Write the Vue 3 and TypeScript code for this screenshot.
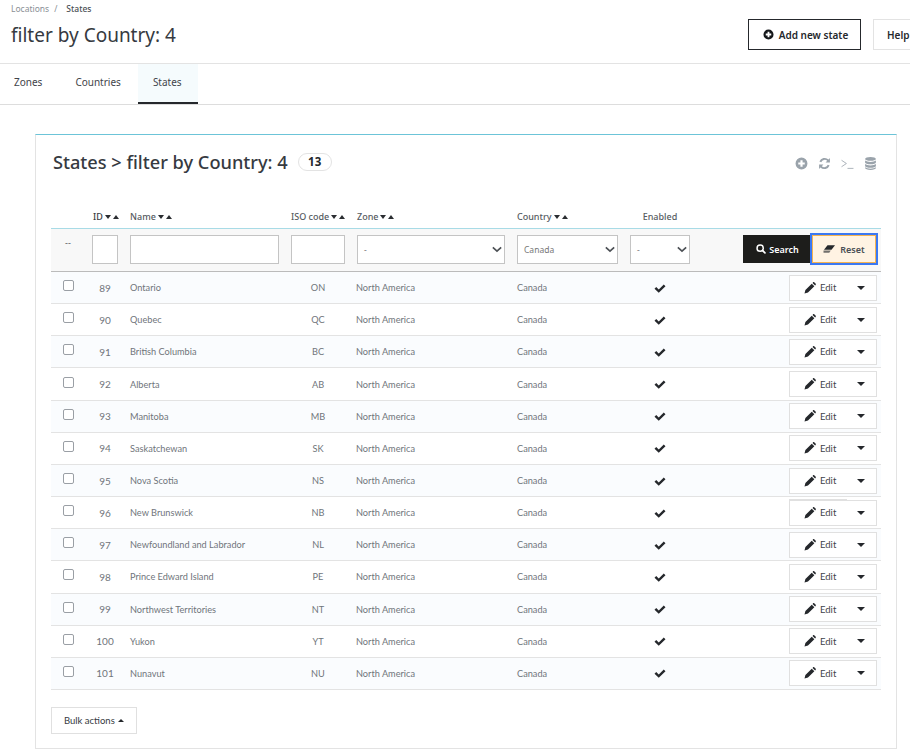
<script setup lang="ts">
interface StateRow {
  id: number;
  name: string;
  iso: string;
}

const rows: StateRow[] = [
  { id: 89, name: 'Ontario', iso: 'ON' },
  { id: 90, name: 'Quebec', iso: 'QC' },
  { id: 91, name: 'British Columbia', iso: 'BC' },
  { id: 92, name: 'Alberta', iso: 'AB' },
  { id: 93, name: 'Manitoba', iso: 'MB' },
  { id: 94, name: 'Saskatchewan', iso: 'SK' },
  { id: 95, name: 'Nova Scotia', iso: 'NS' },
  { id: 96, name: 'New Brunswick', iso: 'NB' },
  { id: 97, name: 'Newfoundland and Labrador', iso: 'NL' },
  { id: 98, name: 'Prince Edward Island', iso: 'PE' },
  { id: 99, name: 'Northwest Territories', iso: 'NT' },
  { id: 100, name: 'Yukon', iso: 'YT' },
  { id: 101, name: 'Nunavut', iso: 'NU' },
];

const sortable = [
  { label: 'ID', cls: 'th-id' },
  { label: 'Name', cls: 'th-name' },
  { label: 'ISO code', cls: 'th-iso' },
  { label: 'Zone', cls: 'th-zone' },
  { label: 'Country', cls: 'th-country' },
];
</script>

<template>
  <div class="page">
    <header class="page-head">
      <div class="head-left">
        <div class="breadcrumb">
          <span class="crumb">Locations</span>
          <span class="crumb-sep">/</span>
          <span class="crumb-active">States</span>
        </div>
        <h1 class="page-title">filter by Country: 4</h1>
      </div>
      <div class="head-actions">
        <button class="btn-add">
          <svg class="ico-add" viewBox="0 0 24 24">
            <path fill-rule="evenodd" d="M12 1a11 11 0 1 0 0 22 11 11 0 0 0 0-22zm-2 5h4v4h4v4h-4v4h-4v-4H6v-4h4z" />
          </svg>
          Add new state
        </button>
        <button class="btn-help">Help</button>
      </div>
    </header>

    <nav class="tabs">
      <a class="tab">Zones</a>
      <a class="tab">Countries</a>
      <a class="tab tab--active">States</a>
    </nav>

    <section class="panel">
      <div class="panel-head">
        <h2 class="panel-title">States &gt; filter by Country: 4</h2>
        <span class="count">13</span>
        <div class="panel-tools">
          <svg class="tool" viewBox="0 0 24 24">
            <path fill-rule="evenodd" d="M12 1a11 11 0 1 0 0 22 11 11 0 0 0 0-22zm-2 5h4v4h4v4h-4v4h-4v-4H6v-4h4z" />
          </svg>
          <svg class="tool" viewBox="0 0 24 24">
            <path d="M22 2v8h-8l3-3a7 7 0 0 0-11 2.500L2.600 8.500A10.500 10.500 0 0 1 19.500 4.500zM2 22v-8h8l-3 3a7 7 0 0 0 11-2.500l3.400 1A10.500 10.500 0 0 1 4.500 19.500z" />
          </svg>
          <svg class="tool" viewBox="0 0 24 24">
            <path d="M1 6l9 6-9 6M12 21h11" fill="none" stroke="currentColor" stroke-width="1.500" />
          </svg>
          <svg class="tool" viewBox="0 0 24 24">
            <path d="M12 0c5.500 0 10 1.600 10 3.500S17.500 7 12 7 2 5.400 2 3.500 6.500 0 12 0zM2 6.500C4 8.300 8 9 12 9s8-.7 10-2.500V10c0 1.900-4.500 3.500-10 3.500S2 11.900 2 10zM2 13c2 1.800 6 2.500 10 2.500s8-.7 10-2.500v3.500c0 1.900-4.500 3.500-10 3.500S2 18.400 2 16.500zM2 19c2 1.800 6 2.500 10 2.500s8-.7 10-2.500v1.500c0 1.900-4.500 3.500-10 3.500S2 22.400 2 20.500z" />
          </svg>
        </div>
      </div>

      <table class="grid">
        <colgroup>
          <col class="c-check" />
          <col class="c-id" />
          <col class="c-name" />
          <col class="c-iso" />
          <col class="c-zone" />
          <col class="c-country" />
          <col class="c-enabled" />
          <col class="c-actions" />
        </colgroup>
        <thead>
          <tr class="head-row">
            <th></th>
            <th v-for="col in sortable" :key="col.label" :class="col.cls">
              {{ col.label }}<span class="sort"><i class="arrow-down"></i><i class="arrow-up"></i></span>
            </th>
            <th class="th-enabled">Enabled</th>
            <th></th>
          </tr>
          <tr class="filter-row">
            <th class="f-dash"><span>--</span></th>
            <th><input class="field" type="text" /></th>
            <th><input class="field" type="text" /></th>
            <th><input class="field" type="text" /></th>
            <th>
              <div class="select"><span>-</span><svg class="chev" viewBox="0 0 12 8"><path d="M1 1.500l5 4.500 5-4.500" /></svg></div>
            </th>
            <th>
              <div class="select"><span>Canada</span><svg class="chev" viewBox="0 0 12 8"><path d="M1 1.500l5 4.500 5-4.500" /></svg></div>
            </th>
            <th>
              <div class="select"><span>-</span><svg class="chev" viewBox="0 0 12 8"><path d="M1 1.500l5 4.500 5-4.500" /></svg></div>
            </th>
            <th class="f-actions">
              <div class="filter-btns">
                <button class="btn-search">
                  <svg class="ico-search" viewBox="0 0 24 24">
                    <circle cx="10" cy="10" r="7.500" fill="none" stroke="currentColor" stroke-width="3.500" />
                    <path d="M15.500 15.500l6 6" stroke="currentColor" stroke-width="4" stroke-linecap="round" />
                  </svg>
                  Search
                </button>
                <button class="btn-reset">
                  <svg class="ico-eraser" viewBox="0 0 24 15">
                    <path d="M9 0h15l-7 9H2z" />
                    <path d="M1 10.500h14.500L12.500 15H1z" opacity="0.650" />
                  </svg>
                  Reset
                </button>
              </div>
            </th>
          </tr>
        </thead>
        <tbody>
          <tr v-for="row in rows" :key="row.id" class="data-row">
            <td class="td-check"><span class="checkbox"></span></td>
            <td class="td-center td-id">{{ row.id }}</td>
            <td>{{ row.name }}</td>
            <td class="td-center">{{ row.iso }}</td>
            <td>North America</td>
            <td>Canada</td>
            <td class="td-center td-ok">
              <svg class="ico-check" viewBox="0 0 24 18">
                <path d="M1 9.500l3.500-3.500 5 5L19.500 1 23 4.500 9.500 17.500z" />
              </svg>
            </td>
            <td class="td-actions">
              <div class="row-btn" :class="{ 'row-btn--raised': row.id === 96 }">
                <svg class="ico-pencil" viewBox="0 0 24 24">
                  <path d="M1 23l1.800-7L15.500 3.300l5.200 5.200L8 21.200zM17 1.800l1-1c.8-.8 2-.8 2.800 0l2.400 2.400c.8.800.8 2 0 2.800l-1 1z" />
                </svg>
                <span class="row-btn-label">Edit</span>
                <i class="row-caret"></i>
              </div>
            </td>
          </tr>
        </tbody>
      </table>

      <div class="panel-foot">
        <button class="btn-bulk">Bulk actions<i class="bulk-caret"></i></button>
      </div>
    </section>
  </div>
</template>

<style>
html,
body {
  margin: 0;
  background: #fff;
  overflow: hidden;
}
</style>

<style scoped>
.page {
  width: 910px;
  height: 750px;
  overflow: hidden;
  font-family: "Noto Sans", "Open Sans", sans-serif;
  color: #363a41;
}

.page-head {
  display: flex;
  justify-content: space-between;
  height: 63px;
  padding-left: 11px;
  border-bottom: 1px solid #e3e3e3;
}

.breadcrumb {
  display: flex;
  margin-top: 3px;
  height: 12px;
  font-size: 8.5px;
  line-height: 12px;
}

.crumb {
  color: #8a8f96;
}

.crumb-sep {
  margin: 0 9px 0 5px;
  color: #8a8f96;
}

.crumb-active {
  color: #4a4f55;
  font-weight: 500;
}

.page-title {
  margin: 5px 0 0;
  font-size: 19px;
  line-height: 30px;
  font-weight: 400;
  color: #363a41;
}

.head-actions {
  display: flex;
  gap: 12px;
  flex: none;
  width: 162px;
  overflow: hidden;
  padding-top: 19px;
  box-sizing: border-box;
}

.head-actions button {
  height: 31px;
  box-sizing: border-box;
  background: #fff;
  font-family: inherit;
  font-size: 10px;
  font-weight: 600;
  color: #25282c;
  flex: none;
}

.btn-add {
  display: flex;
  align-items: center;
  justify-content: center;
  gap: 5px;
  width: 113px;
  padding: 0 0 0 2px;
  border: 1px solid #25282c;
}

.ico-add {
  width: 11px;
  height: 11px;
  fill: #14171a;
}

.btn-help {
  width: 60px;
  padding: 0 0 0 13px;
  text-align: left;
  border: 1px solid #e3e3e3;
}

.tabs {
  display: flex;
  height: 40px;
  border-bottom: 1px solid #ddd;
}

.tab {
  display: block;
  padding: 0 14px;
  margin-right: 4px;
  font-size: 10px;
  line-height: 37px;
  height: 40px;
  box-sizing: border-box;
  color: #3f444a;
}

.tab:nth-child(2) {
  padding: 0 15px;
  margin-right: 2px;
}

.tab--active {
  width: 60px;
  padding: 0 15px;
  margin-right: 0;
  background: #f5fbfd;
  border-bottom: 2px solid #25282c;
}

.panel {
  margin: 29px 0 0 35px;
  width: 862px;
  height: 615px;
  box-sizing: border-box;
  padding: 0 15px;
  border: 1px solid #e3e3e3;
  border-top: 1px solid #6cc4d8;
}

.panel-head {
  display: flex;
  align-items: center;
  height: 70px;
  padding: 0 0 16px 2px;
  box-sizing: border-box;
}

.panel-title {
  margin: 0;
  font-size: 18.2px;
  line-height: 24px;
  font-weight: 500;
  color: #363a41;
}

.count {
  margin-left: 10px;
  width: 34px;
  height: 18px;
  border: 1px solid #e3e3e3;
  border-radius: 10px;
  box-sizing: border-box;
  text-align: center;
  font-size: 11.5px;
  line-height: 16px;
  font-weight: 700;
  color: #25282c;
}

.panel-tools {
  display: flex;
  align-items: center;
  gap: 10px;
  margin-left: auto;
  margin-right: 4px;
  margin-top: 2px;
  color: #9aa3ab;
}

.tool {
  width: 13px;
  height: 13px;
  fill: #9aa3ab;
}

.grid {
  width: 830px;
  table-layout: fixed;
  border-collapse: collapse;
}

.c-check { width: 35px; }
.c-id { width: 38px; }
.c-name { width: 161px; }
.c-iso { width: 66px; }
.c-zone { width: 160px; }
.c-country { width: 113px; }
.c-enabled { width: 72px; }
.c-actions { width: 185px; }

.head-row th {
  height: 23px;
  padding: 0 6px;
  font-size: 9px;
  font-weight: 500;
  color: #565b61;
  text-align: left;
  white-space: nowrap;
  overflow: visible;
}

.head-row .th-id {
  padding-left: 7px;
  color: #363a41;
}

.head-row .th-enabled {
  text-align: center;
}

.sort {
  display: inline-flex;
  align-items: center;
  gap: 2px;
  margin-left: 2px;
  vertical-align: 1px;
}

.arrow-down,
.arrow-up {
  display: block;
  width: 0;
  height: 0;
  border-left: 3px solid transparent;
  border-right: 3px solid transparent;
}

.arrow-down {
  border-top: 4px solid #2a2d31;
}

.arrow-up {
  border-bottom: 4px solid #2a2d31;
}

.filter-row th {
  height: 43px;
  padding: 0 6px 2px;
  background: #f8f8f8;
  border-top: 1px solid #a8dbe6;
  border-bottom: 1px solid #bbb;
  box-sizing: border-box;
  font-weight: 400;
  text-align: left;
}

.f-dash span {
  display: block;
  margin: -13px 0 0 8px;
  font-size: 9px;
  color: #565b61;
}

.field,
.select {
  display: block;
  width: 100%;
  height: 29px;
  box-sizing: border-box;
  padding: 0;
  border: 1px solid #c4c4c4;
  border-radius: 0;
  background: #fff;
  outline: none;
}

.select {
  display: flex;
  align-items: center;
  justify-content: space-between;
  padding: 0 2px 0 6px;
  font-size: 8.500px;
  color: #777;
}

.chev {
  width: 10px;
  height: 7px;
  fill: none;
  stroke: #4c5055;
  stroke-width: 2;
}

.filter-row .f-actions {
  padding-right: 5px;
}

.filter-btns {
  display: flex;
  justify-content: flex-end;
}

.filter-btns button {
  display: flex;
  align-items: center;
  justify-content: center;
  gap: 3px;
  height: 28px;
  padding: 0;
  border: 0;
  box-sizing: border-box;
  font-family: inherit;
  font-size: 9px;
  font-weight: 600;
}

.btn-search {
  width: 69px;
  background: #1d1d1b;
  color: #fff;
  padding-right: 2px;
}

.ico-search {
  width: 10px;
  height: 10px;
}

.filter-btns .btn-reset {
  width: 64px;
  background: #fff3e3;
  color: #4a4f55;
  border: 1px solid #f5b34f;
  outline: 2px solid #3b78f2;
  outline-offset: 0;
}

.ico-eraser {
  width: 12px;
  height: 8px;
  margin-right: 2px;
  fill: #25282c;
}

.data-row {
  height: 32.17px;
}

.data-row td {
  padding: 0 6px;
  border-bottom: 1px solid #e3e3e3;
  font-family: Lato, "Open Sans", sans-serif;
  font-size: 9.200px;
  color: #70757b;
  white-space: nowrap;
}

.data-row td:nth-child(5) {
  padding-left: 5px;
}

.data-row:nth-child(odd) {
  background: #fafcfe;
}

.td-center {
  text-align: center;
}

.data-row .td-id {
  font-size: 10px;
}

.data-row .td-check {
  padding-left: 12px;
}

.checkbox {
  display: block;
  width: 9px;
  height: 9px;
  margin-top: -4px;
  background: #fff;
  border: 1px solid #9a9fa5;
  border-radius: 2px;
}

.ico-check {
  display: block;
  width: 12px;
  height: 9px;
  margin: 1px auto 0;
  fill: #25282c;
}

.data-row .td-actions {
  padding-right: 4px;
}

.row-btn {
  position: relative;
  display: flex;
  align-items: center;
  width: 88px;
  height: 26px;
  margin-left: auto;
  box-sizing: border-box;
  padding-left: 14px;
  background: #fff;
  border: 1px solid #e0e0e0;
  color: #3f444a;
}

/* row 96: left part of the split button sits a pixel higher */
.row-btn--raised::before {
  content: "";
  position: absolute;
  top: -2px;
  left: -1px;
  width: 58px;
  height: 1px;
  background: #e0e0e0;
}

.ico-pencil {
  width: 12px;
  height: 12px;
  fill: #25282c;
}

.row-btn-label {
  margin-left: 4px;
  font-size: 9.500px;
}

.row-caret {
  width: 0;
  height: 0;
  margin-left: auto;
  margin-right: 11px;
  border-left: 4px solid transparent;
  border-right: 4px solid transparent;
  border-top: 4px solid #25282c;
}

.panel-foot {
  padding-top: 17px;
}

.btn-bulk {
  display: flex;
  align-items: center;
  gap: 3px;
  width: 86px;
  height: 27px;
  padding: 0 0 0 12px;
  background: #fff;
  border: 1px solid #e0e0e0;
  font-family: Lato, "Open Sans", sans-serif;
  font-size: 9.500px;
  color: #363a41;
}

.bulk-caret {
  width: 0;
  height: 0;
  border-left: 3px solid transparent;
  border-right: 3px solid transparent;
  border-bottom: 3px solid #25282c;
}
</style>
